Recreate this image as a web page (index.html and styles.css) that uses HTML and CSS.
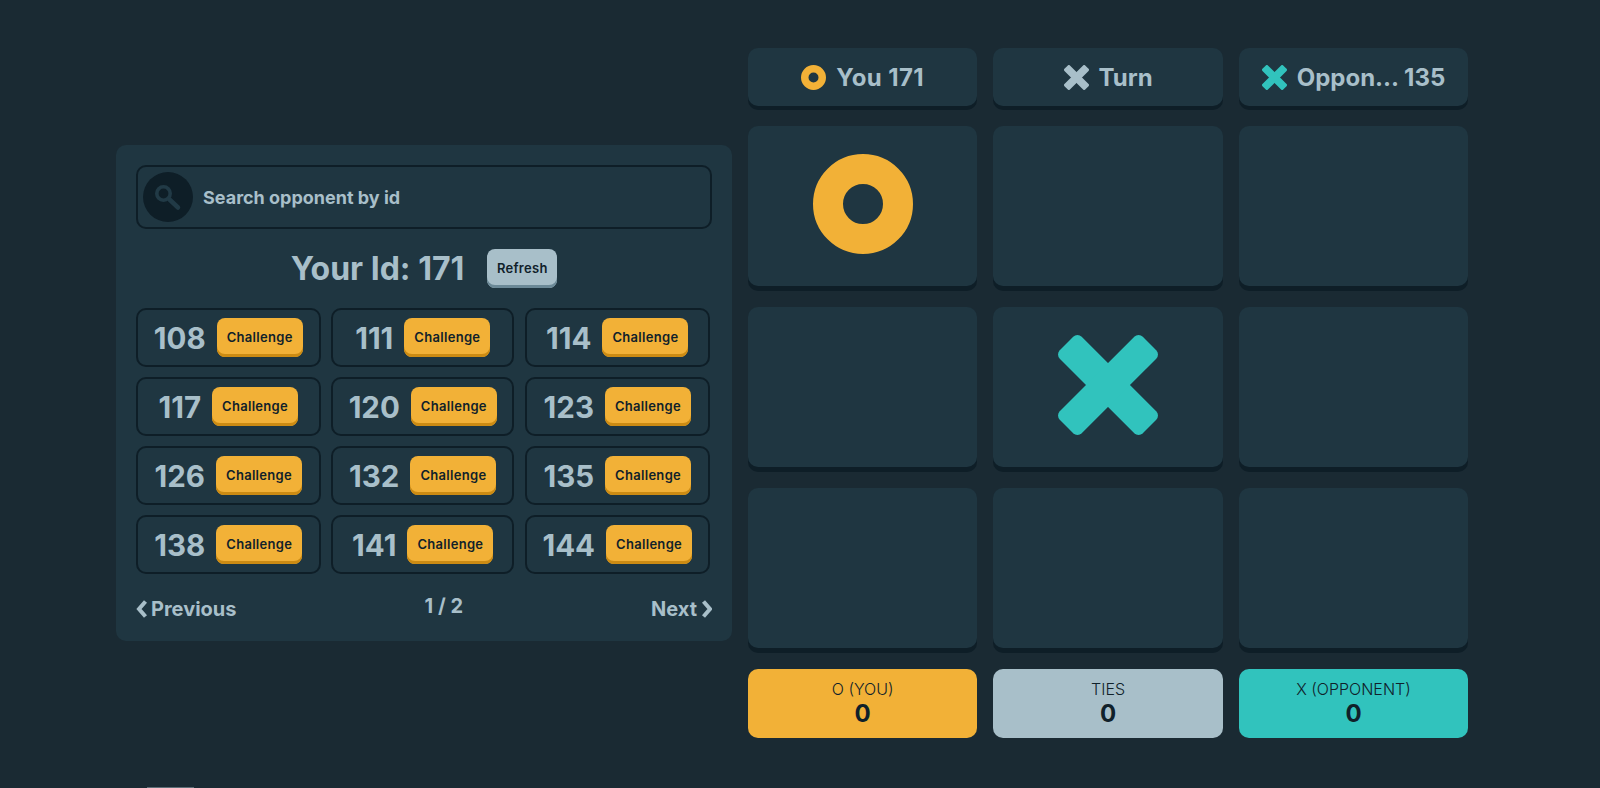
FILE: index.html
```html
<!DOCTYPE html>
<html lang="en">
<head>
    <meta charset="UTF-8">
    <meta name="viewport" content="width=device-width, initial-scale=1.0">
    <title>Tic Tac Toe</title>
    <link rel="stylesheet" href="styles.css">
</head>
<body>
<main class="page">
    <section class="lobby">
        <div class="search">
            <span class="search-icon">
                <svg viewBox="0 0 30 30" width="30" height="30">
                    <circle cx="10.5" cy="11.5" r="6.7" fill="none" stroke="#213a46" stroke-width="3.6"/>
                    <line x1="16.5" y1="17.5" x2="25" y2="25.5" stroke="#213a46" stroke-width="4.5" stroke-linecap="round"/>
                </svg>
            </span>
            <span class="search-text">Search opponent by id</span>
        </div>

        <div class="your-id">
            <h2>Your Id: 171</h2>
            <button class="btn btn-silver" type="button">Refresh</button>
        </div>

        <div class="players">
            <div class="player"><span class="player-id">108</span><button class="btn btn-gold" type="button">Challenge</button></div>
            <div class="player"><span class="player-id">111</span><button class="btn btn-gold" type="button">Challenge</button></div>
            <div class="player"><span class="player-id">114</span><button class="btn btn-gold" type="button">Challenge</button></div>
            <div class="player"><span class="player-id">117</span><button class="btn btn-gold" type="button">Challenge</button></div>
            <div class="player"><span class="player-id">120</span><button class="btn btn-gold" type="button">Challenge</button></div>
            <div class="player"><span class="player-id">123</span><button class="btn btn-gold" type="button">Challenge</button></div>
            <div class="player"><span class="player-id">126</span><button class="btn btn-gold" type="button">Challenge</button></div>
            <div class="player"><span class="player-id">132</span><button class="btn btn-gold" type="button">Challenge</button></div>
            <div class="player"><span class="player-id">135</span><button class="btn btn-gold" type="button">Challenge</button></div>
            <div class="player"><span class="player-id">138</span><button class="btn btn-gold" type="button">Challenge</button></div>
            <div class="player"><span class="player-id">141</span><button class="btn btn-gold" type="button">Challenge</button></div>
            <div class="player"><span class="player-id">144</span><button class="btn btn-gold" type="button">Challenge</button></div>
        </div>

        <div class="pager">
            <a class="pager-link">
                <svg viewBox="0 0 12 20" width="12" height="20"><path d="M9.5 2.5 L3 10 L9.5 17.5" fill="none" stroke="#a8bfc9" stroke-width="4"/></svg>
                Previous
            </a>
            <span class="pager-count">1 / 2</span>
            <a class="pager-link">
                Next
                <svg viewBox="0 0 12 20" width="12" height="20"><path d="M3.5 2.5 L10 10 L3.5 17.5" fill="none" stroke="#a8bfc9" stroke-width="4"/></svg>
            </a>
        </div>
    </section>

    <section class="game">
        <div class="status status-you">
            <svg class="icon-small" viewBox="0 0 100 100"><circle cx="50" cy="50" r="35" fill="none" stroke="#f2b137" stroke-width="30"/></svg>
            <span>You 171</span>
        </div>
        <div class="status">
            <svg class="icon-small" viewBox="0 0 100 100" fill="#a8bfc9"><rect x="-8.7" y="34.5" width="117.4" height="31" rx="6" transform="rotate(45 50 50)"/><rect x="-8.7" y="34.5" width="117.4" height="31" rx="6" transform="rotate(-45 50 50)"/></svg>
            <span>Turn</span>
        </div>
        <div class="status">
            <svg class="icon-small" viewBox="0 0 100 100" fill="#31c3bd"><rect x="-8.7" y="34.5" width="117.4" height="31" rx="6" transform="rotate(45 50 50)"/><rect x="-8.7" y="34.5" width="117.4" height="31" rx="6" transform="rotate(-45 50 50)"/></svg>
            <span>Oppon... 135</span>
        </div>

        <div class="cell">
            <svg class="icon-big" viewBox="0 0 100 100"><circle cx="50" cy="50" r="35" fill="none" stroke="#f2b137" stroke-width="30"/></svg>
        </div>
        <div class="cell"></div>
        <div class="cell"></div>
        <div class="cell"></div>
        <div class="cell">
            <svg class="icon-big" viewBox="0 0 100 100" fill="#31c3bd"><rect x="-8.7" y="34.5" width="117.4" height="31" rx="6" transform="rotate(45 50 50)"/><rect x="-8.7" y="34.5" width="117.4" height="31" rx="6" transform="rotate(-45 50 50)"/></svg>
        </div>
        <div class="cell"></div>
        <div class="cell"></div>
        <div class="cell"></div>
        <div class="cell"></div>

        <div class="score score-gold"><span class="score-label">O (YOU)</span><span class="score-value">0</span></div>
        <div class="score score-silver"><span class="score-label">TIES</span><span class="score-value">0</span></div>
        <div class="score score-teal"><span class="score-label">X (OPPONENT)</span><span class="score-value">0</span></div>
    </section>
</main>
<div class="stray"></div>
</body>
</html>
```

FILE: styles.css
```css
* {
    box-sizing: border-box;
}

body {
    margin: 0;
    height: 788px;
    overflow: hidden;
    position: relative;
    background-color: #1a2a33;
    color: #a8bfc9;
    font-family: Inter, "Liberation Sans", sans-serif;
}

.page {
    display: flex;
    align-items: center;
    gap: 16px;
    height: 788px;
    padding: 0 0 2px 116px;
}

/* left panel */
.lobby {
    width: 616px;
    height: 496px;
    padding: 20px 20px 0;
    background-color: #1f3641;
    border-radius: 10px;
}

.search {
    display: flex;
    align-items: center;
    gap: 10px;
    width: 576px;
    height: 64px;
    padding-left: 5px;
    border: 2px solid #0e1e27;
    border-radius: 10px;
}

.search-icon {
    display: flex;
    align-items: center;
    justify-content: center;
    width: 50px;
    height: 50px;
    border-radius: 50%;
    background-color: #0e1e27;
}

.search-text {
    font-size: 18px;
    font-weight: 700;
}

.your-id {
    display: flex;
    align-items: center;
    justify-content: center;
    gap: 23px;
    margin: 20px 0 20px;
}

.your-id h2 {
    margin: 0;
    font-size: 32px;
    font-weight: 700;
}

.btn {
    height: 39px;
    padding: 0 0 2px;
    border: none;
    border-radius: 8px;
    color: #10212a;
    font-family: Inter, "Liberation Sans", sans-serif;
    font-size: 13px;
    font-weight: 600;
    letter-spacing: 0.3px;
}

.btn-silver {
    width: 70px;
    background-color: #a8bfc9;
    box-shadow: inset 0 -3px 0 #6b8997;
}

.btn-gold {
    width: 86px;
    background-color: #f2b137;
    box-shadow: inset 0 -3px 0 #cc8b13;
}

.players {
    display: grid;
    grid-template-columns: 184.5px 183px 184.5px;
    gap: 10px 10.75px;
}

.player {
    display: flex;
    align-items: center;
    justify-content: center;
    gap: 11px;
    height: 59px;
    border: 2px solid #0e1e27;
    border-radius: 10px;
}

.player-id {
    font-size: 29.5px;
    font-weight: 700;
}

.pager {
    display: flex;
    align-items: center;
    justify-content: space-between;
    width: 576px;
    margin-top: 23px;
}

.pager-link {
    display: flex;
    align-items: center;
    gap: 3px;
    font-size: 20px;
    font-weight: 700;
}

.pager-count {
    margin-top: -6px;
    font-size: 20px;
    font-weight: 700;
}

/* board */
.game {
    display: grid;
    grid-template-columns: repeat(3, 229.4px);
    grid-template-rows: 57px 160px 160px 160px 69px;
    column-gap: 16px;
    row-gap: 21px;
}

.status {
    display: flex;
    align-items: center;
    justify-content: center;
    gap: 10px;
    height: 58px;
    background-color: #1f3641;
    border-radius: 10px;
    box-shadow: 0 4px 0 #0e1e27;
    font-size: 24px;
    font-weight: 700;
}

.status-you {
    letter-spacing: 0.4px;
}

.icon-small {
    width: 25px;
    height: 25px;
}

.cell {
    display: flex;
    align-items: center;
    justify-content: center;
    padding-bottom: 4px;
    background-color: #1f3641;
    border-radius: 10px;
    box-shadow: 0 5px 0 #0e1e27;
}

.icon-big {
    width: 100px;
    height: 100px;
}

.score {
    display: flex;
    flex-direction: column;
    align-items: center;
    justify-content: center;
    border-radius: 10px;
    color: #10212a;
}

.score-gold {
    background-color: #f2b137;
}

.score-silver {
    background-color: #a8bfc9;
}

.score-teal {
    background-color: #31c3bd;
}

.score-label {
    font-size: 16px;
    font-weight: 300;
}

.score-value {
    font-size: 24px;
    font-weight: 700;
}

/* sliver of something below the fold */
.stray {
    position: absolute;
    left: 147px;
    bottom: 0;
    width: 47px;
    height: 1px;
    background-color: #5d6e77;
}
```
